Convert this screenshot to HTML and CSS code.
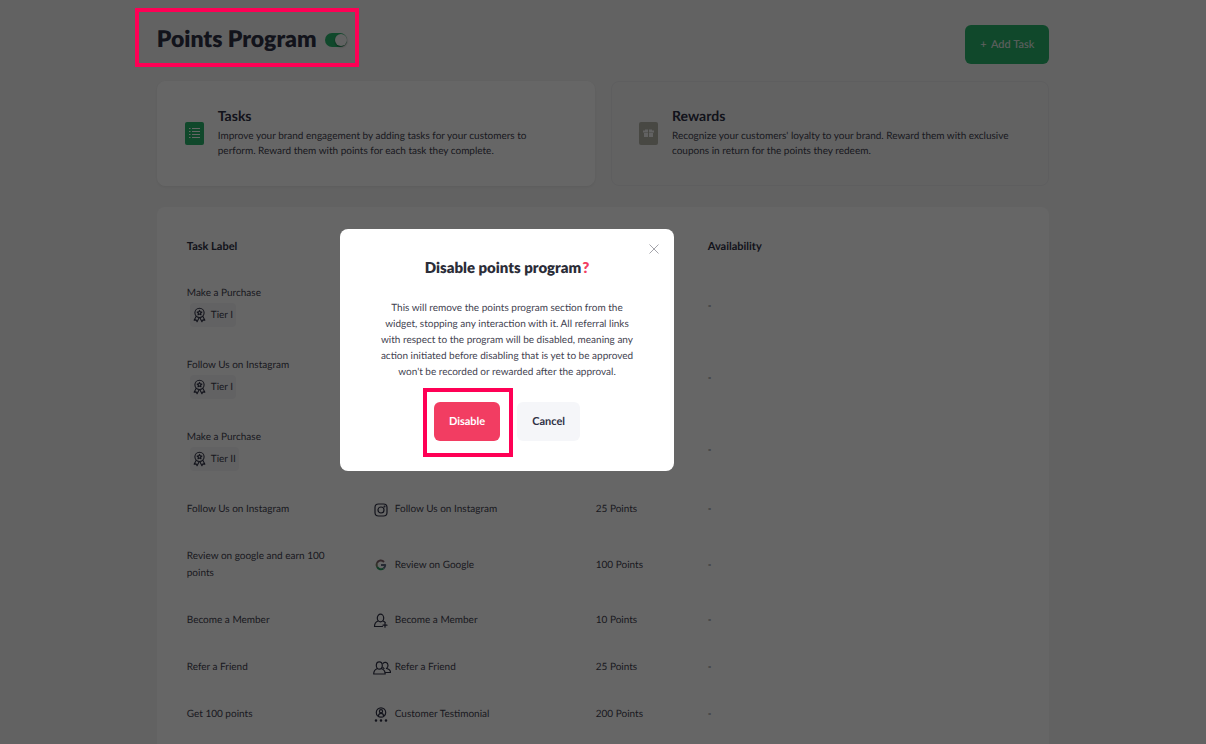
FILE: index.html
```
<!DOCTYPE html>
<html lang="en">
<head>
    <meta charset="UTF-8">
    <meta name="viewport" content="width=device-width, initial-scale=1.0">
    <title>Points Program</title>
    <link rel="stylesheet" href="styles.css">
</head>
<body>
    <!-- shared icons -->
    <svg class="sprite" aria-hidden="true">
        <symbol id="medal" viewBox="0 0 24 28">
            <circle cx="12" cy="10" r="8.5"/>
            <path d="M12 5.5l1.4 2.7 3 .4-2.2 2.1.5 3L12 12.300l-2.700 1.400.5-3-2.200-2.100 3-.4z"/>
            <path d="M6 16.500L2 23.500l3.800-.5 1.700 3.500 3.300-6.500M18 16.500l4 7-3.800-.5-1.700 3.500-3.300-6.500"/>
        </symbol>
    </svg>

    <main class="page">
        <header class="header">
            <h1 class="title">Points Program</h1>
            <input type="checkbox" class="toggle" aria-label="Points program enabled" checked>
            <button class="btn btn-add"><span>+</span> Add Task</button>
        </header>

        <section class="tabs">
            <div class="tab tab-active">
                <svg class="tab-icon" viewBox="0 0 19 23">
                    <rect width="19" height="23" rx="2" fill="#2ab46d"/>
                    <path d="M7 6.500h8M7 9.500h8M7 12.500h8M7 15.500h8M4 6.500h1.500M4 9.500h1.500M4 12.500h1.500M4 15.500h1.500" stroke="#fff" fill="none"/>
                </svg>
                <div>
                    <h2>Tasks</h2>
                    <p>Improve your brand engagement by adding tasks for your customers to perform. Reward them with points for each task they complete.</p>
                </div>
            </div>
            <div class="tab">
                <svg class="tab-icon" viewBox="0 0 19 23">
                    <rect width="19" height="23" rx="2" fill="#b4b4a8"/>
                    <path d="M4 8.500h5v2H4zM10 8.500h5v2h-5zM5 11h4v4H5zM10 11h4v4h-4zM6 7.500h3v1H6zM10 7.500h3v1h-3z" fill="#f5f5f5"/>
                </svg>
                <div>
                    <h2>Rewards</h2>
                    <p>Recognize your customers' loyalty to your brand. Reward them with exclusive coupons in return for the points they redeem.</p>
                </div>
            </div>
        </section>

        <section class="card">
            <table class="tasks">
                <thead>
                    <tr>
                        <th class="col-label">Task Label</th>
                        <th class="col-task">Task</th>
                        <th class="col-points">Points</th>
                        <th>Availability</th>
                    </tr>
                </thead>
                <tbody>
                    <tr>
                        <td>Make a Purchase<div class="tier"><svg class="icon medal"><use href="#medal"/></svg>Tier I</div></td>
                        <td></td>
                        <td></td>
                        <td>-</td>
                    </tr>
                    <tr>
                        <td>Follow Us on Instagram<div class="tier"><svg class="icon medal"><use href="#medal"/></svg>Tier I</div></td>
                        <td></td>
                        <td></td>
                        <td>-</td>
                    </tr>
                    <tr>
                        <td>Make a Purchase<div class="tier"><svg class="icon medal"><use href="#medal"/></svg>Tier II</div></td>
                        <td></td>
                        <td></td>
                        <td>-</td>
                    </tr>
                    <tr>
                        <td>Follow Us on Instagram</td>
                        <td><div class="task">
                            <svg class="icon" viewBox="0 0 18 16">
                                <rect x="2" y="2" width="12" height="12" rx="3.500"/>
                                <circle cx="8" cy="8" r="3"/>
                                <circle cx="11.500" cy="4.500" r=".4"/>
                            </svg>Follow Us on Instagram</div></td>
                        <td>25 Points</td>
                        <td>-</td>
                    </tr>
                    <tr>
                        <td>Review on google and earn 100 points</td>
                        <td><div class="task">
                            <svg class="icon google" viewBox="0 0 18 16">
                                <path d="M4 6A4.200 4.200 0 0 1 11 5" stroke="#80636a"/>
                                <path d="M4.200 10A4.200 4.200 0 0 1 4 6" stroke="#80806a"/>
                                <path d="M4.200 10A4.200 4.200 0 0 0 10.500 11.500" stroke="#2a9a60"/>
                                <path d="M8 8h4.200A4.200 4.200 0 0 1 10.500 11.500" stroke="#606a80"/>
                            </svg>Review on Google</div></td>
                        <td>100 Points</td>
                        <td>-</td>
                    </tr>
                    <tr>
                        <td>Become a Member</td>
                        <td><div class="task">
                            <svg class="icon" viewBox="0 0 18 16">
                                <ellipse cx="7.500" cy="5" rx="3.200" ry="3.800"/>
                                <path d="M5 8C2.500 9 1.500 10.500 1.500 13.500h8M10 8c1 .4 1.800 1 2.300 1.700M12 10.200v4M10 12.200h4"/>
                            </svg>Become a Member</div></td>
                        <td>10 Points</td>
                        <td>-</td>
                    </tr>
                    <tr>
                        <td>Refer a Friend</td>
                        <td><div class="task">
                            <svg class="icon" viewBox="0 0 18 16">
                                <ellipse cx="6.300" cy="5.500" rx="3" ry="3.700"/>
                                <path d="M4.500 8.500C1.500 9.500.7 11 .7 14h11.500c0-3-1-4.500-4-5.500"/>
                                <path d="M10 3.500c1-2 5-1.500 5 1.800 0 1.500-.7 2.700-1.500 3.200 3 .7 4 2 4 4h-5.300M10 7.500c.3.500.5.800 1 1"/>
                            </svg>Refer a Friend</div></td>
                        <td>25 Points</td>
                        <td>-</td>
                    </tr>
                    <tr>
                        <td>Get 100 points</td>
                        <td><div class="task">
                            <svg class="icon" viewBox="0 0 18 16">
                                <circle cx="8" cy="5.500" r="4.700"/>
                                <circle cx="8" cy="4.300" r="1.600"/>
                                <path d="M5.500 9c0-3.500 5-3.500 5 0"/>
                                <path class="dots" d="M3 13.500h0M8 13.500h0M13 13.500h0"/>
                            </svg>Customer Testimonial</div></td>
                        <td>200 Points</td>
                        <td>-</td>
                    </tr>
                </tbody>
            </table>
        </section>
    </main>

    <div class="overlay"></div>

    <div class="modal" role="dialog" aria-labelledby="modal-title">
        <button class="close" aria-label="Close">
            <svg viewBox="0 0 10 10"><path d="M.5.5l9 9M9.500.5l-9 9"/></svg>
        </button>
        <h2 id="modal-title" class="modal-title">Disable points program<span>?</span></h2>
        <p class="modal-text">This will remove the points program section from the widget, stopping any interaction with it. All referral links with respect to the program will be disabled, meaning any action initiated before disabling that is yet to be approved won't be recorded or rewarded after the approval.</p>
        <div class="modal-actions">
            <button class="btn btn-disable">Disable</button>
            <button class="btn btn-cancel">Cancel</button>
        </div>
    </div>

    <div class="highlight highlight-title"></div>
    <div class="highlight highlight-disable"></div>
</body>
</html>
```
FILE: styles.css
```
* {
    margin: 0;
    padding: 0;
    box-sizing: border-box;
}
body {
    height: 100vh;
    overflow: hidden;
    font-family: Lato, "Liberation Sans", sans-serif;
    font-size: 10px;
    line-height: 17px;
    text-rendering: geometricPrecision;
    color: #3f4250;
    background-color: #f5f5f5;
}
button {
    border: none;
    font-family: inherit;
    text-rendering: inherit;
    cursor: pointer;
}
.sprite {
    display: none;
}
.page {
    margin: 0 13%;
    padding-top: 25px;
}
.header {
    display: flex;
    align-items: flex-start;
    height: 56px;
}
.title {
    font-size: 23px;
    line-height: 27px;
    font-weight: 800;
    color: #2f3145;
}
.toggle {
    appearance: none;
    width: 22px;
    height: 14px;
    margin: 8px 0 0 8px;
    border-radius: 7px;
    background-color: #2ab46d;
}
.toggle::before {
    content: "";
    display: block;
    width: 12px;
    height: 12px;
    margin: 1px 0 0 10px;
    border-radius: 50%;
    background-color: #f5f5f5;
    box-shadow: 0 1px 2px rgba(0, 0, 0, .4);
}
.btn {
    height: 39px;
    padding: 0 15px;
    border-radius: 6px;
    font-size: 11px;
    font-weight: 700;
}
.btn-add {
    margin-left: auto;
    font-weight: 400;
    color: #f0f0f0;
    background-color: #2ab46d;
}
.btn-add span {
    margin-right: 2px;
}
.tabs {
    display: grid;
    grid-template-columns: 1fr 1fr;
    gap: 16px;
}
.tab {
    display: flex;
    align-items: center;
    gap: 14px;
    height: 105px;
    padding: 0 32px 0 27px;
    border: 1px solid #ececee;
    border-radius: 8px;
}
.tab-active {
    border-color: #fff;
    background-color: #fff;
    box-shadow: 0 1px 3px rgba(0, 0, 0, .06);
}
.tab-icon {
    flex: none;
    width: 19px;
    height: 23px;
}
.tab h2 {
    font-size: 14px;
    line-height: 20px;
    color: #2f3145;
}
.tab p {
    line-height: 15px;
    padding: 3px 0;
}
.card {
    margin-top: 21px;
    padding: 16px 30px;
    border-radius: 8px;
    background-color: #fff;
}
.tasks {
    width: 100%;
    table-layout: fixed;
    border-collapse: collapse;
}
.tasks th, .tasks td {
    padding: 15px 0;
    text-align: left;
}
.tasks th {
    font-size: 11px;
    color: #2f3145;
}
.tasks td:first-child {
    padding-right: 30px;
}
.col-label {
    width: 186px;
}
.col-task {
    width: 223px;
}
.col-points {
    width: 112px;
}
.tier {
    display: flex;
    align-items: center;
    gap: 5px;
    width: fit-content;
    height: 24px;
    margin: 1px 0 0 3px;
    padding: 0 3px;
    border-radius: 4px;
    background-color: #f5f5f7;
}
.task {
    display: flex;
    align-items: center;
    gap: 4px;
}
.icon {
    flex: none;
    width: 18px;
    height: 16px;
    fill: none;
    stroke: #2f3145;
    stroke-width: 1.2;
    stroke-linecap: round;
    stroke-linejoin: round;
}
.icon .dots {
    stroke-width: 2.6;
}
.google {
    stroke-width: 2;
    stroke-linecap: butt;
}
.medal {
    width: 13px;
    stroke-width: 2;
}
.overlay {
    position: fixed;
    inset: 0;
    background-color: rgba(0, 0, 0, .6);
}
.modal {
    position: absolute;
    top: 229px;
    left: 340px;
    width: 334px;
    padding: 29px 37px 30px;
    border-radius: 8px;
    text-align: center;
    background-color: #fff;
}
.close {
    position: absolute;
    top: 12px;
    right: 12px;
    width: 16px;
    height: 16px;
    background: none;
}
.close svg {
    display: block;
    width: 10px;
    height: 10px;
    margin: 0 auto;
    stroke: #a5a5ab;
}
.modal-title {
    font-size: 15px;
    line-height: 20px;
    font-weight: 800;
    color: #2b2d38;
}
.modal-title span {
    padding-left: 1px;
    color: #f23d62;
}
.modal-text {
    margin-top: 22px;
    line-height: 16px;
}
.modal-actions {
    display: flex;
    justify-content: center;
    gap: 17px;
    margin-top: 22px;
}
.btn-disable {
    color: #fff;
    background-color: #f23d62;
}
.btn-cancel {
    color: #2f3145;
    background-color: #f5f6f9;
}
.highlight {
    position: absolute;
    border: 4px solid #ff0055;
    pointer-events: none;
}
.highlight-title {
    top: 8px;
    left: 135px;
    width: 224px;
    height: 59px;
}
.highlight-disable {
    top: 388px;
    left: 423px;
    width: 90px;
    height: 69px;
}
```
